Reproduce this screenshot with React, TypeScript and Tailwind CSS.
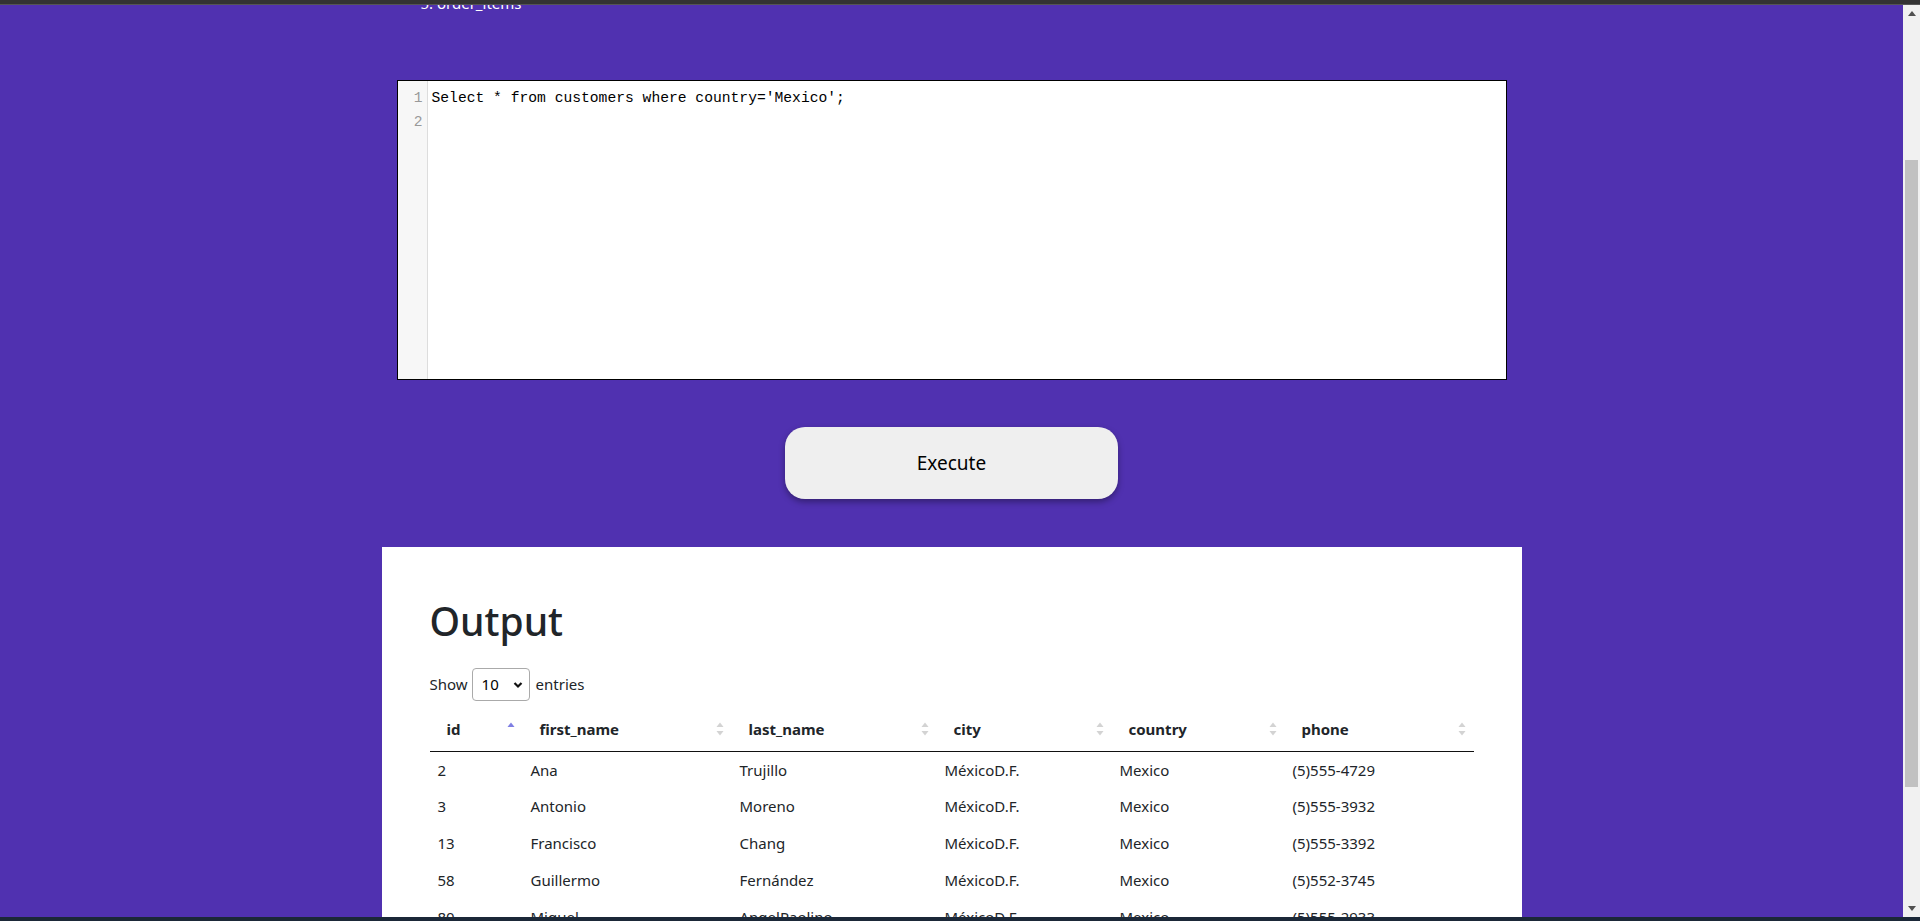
import React from "react";

const rows = [
  ["2", "Ana", "Trujillo", "MéxicoD.F.", "Mexico", "(5)555-4729"],
  ["3", "Antonio", "Moreno", "MéxicoD.F.", "Mexico", "(5)555-3932"],
  ["13", "Francisco", "Chang", "MéxicoD.F.", "Mexico", "(5)555-3392"],
  ["58", "Guillermo", "Fernández", "MéxicoD.F.", "Mexico", "(5)552-3745"],
  ["80", "Miguel", "AngelPaolino", "MéxicoD.F.", "Mexico", "(5)555-2933"],
  ["", "", "", "", "", ""],
];

const cols = [
  { name: "id", w: "w-[93px]", active: true },
  { name: "first_name", w: "w-[209px]", active: false },
  { name: "last_name", w: "w-[205px]", active: false },
  { name: "city", w: "w-[175px]", active: false },
  { name: "country", w: "w-[173px]", active: false },
  { name: "phone", w: "w-[189px]", active: false },
];

function SortIcon({ active }: { active: boolean }) {
  return (
    <svg width="8" height="14" viewBox="0 0 8 14" className="shrink-0">
      <polygon points="4,0.5 7.5,5 0.5,5" fill={active ? "#7f7fe3" : "#d3d3d3"} />
      {!active && <polygon points="0.5,9 7.5,9 4,13.5" fill="#d3d3d3" />}
    </svg>
  );
}

export default function App() {
  const sans = "font-['Noto_Sans','Open_Sans',sans-serif]";
  return (
    <div className={`w-[1920px] h-[921px] flex flex-col overflow-hidden ${sans}`}>
      <div className="h-[4px] bg-[#333333] shrink-0" />
      <div className="h-[1px] bg-[#555555] shrink-0" />
      <div className="flex flex-1 min-h-0">
        {/* main purple area */}
        <div className="flex-1 bg-[#5031b0] overflow-hidden flex flex-col items-center">
          <div className="w-[1110px] mt-[-14px] text-white text-[15px] leading-[24px] pl-[24px]">
            5. order_items
          </div>

          {/* editor */}
          <div className="mt-[65px] w-[1110px] h-[300px] border border-black bg-white flex shrink-0">
            <div className="w-[30px] bg-[#f7f7f7] border-r border-[#dddddd] pt-[5px] pr-[4px] text-right font-['Liberation_Mono',monospace] text-[14.67px] leading-[24px] text-[#999999]">
              <div>1</div>
              <div>2</div>
            </div>
            <div className="flex-1 pt-[5px] pl-[4px] font-['Liberation_Mono',monospace] text-[14.67px] leading-[24px] text-black whitespace-pre">
              <div>Select * from customers where country='Mexico';</div>
              <div> </div>
            </div>
          </div>

          {/* execute button */}
          <button className="mt-[47px] w-[333px] h-[72px] shrink-0 rounded-[20px] bg-[#efefef] text-black text-[19px] shadow-[0_3px_6px_rgba(0,0,0,0.35)]">
            Execute
          </button>

          {/* output panel */}
          <div className="mt-[48px] w-[1140px] bg-white px-[48px] pt-[48px] pb-[40px] shrink-0 text-[#212529]">
            <h1 className="text-[39px] leading-[52px] font-medium">Output</h1>
            <div className="mt-[21px] flex items-center h-[33px] text-[15px]">
              <span>Show</span>
              <div className="ml-[4px] w-[58px] h-[33px] border border-[#aaaaaa] rounded-[4px] flex items-center justify-between pl-[9px] pr-[6px]">
                <span className="text-black">10</span>
                <svg width="10" height="8" viewBox="0 0 10 8">
                  <polyline points="1.5,2 5,5.5 8.5,2" fill="none" stroke="#111" strokeWidth="2.2" />
                </svg>
              </div>
              <span className="ml-[6px]">entries</span>
            </div>

            <table className="mt-[10px] w-[1044px] table-fixed border-collapse text-[15px]">
              <thead>
                <tr className="border-b border-[#111111]">
                  {cols.map((c) => (
                    <th key={c.name} className={`${c.w} h-[40px] p-0 pb-[4px] text-left font-bold`}>
                      <div className="flex items-center justify-between pl-[17px] pr-[8px]">
                        <span>{c.name}</span>
                        <SortIcon active={c.active} />
                      </div>
                    </th>
                  ))}
                </tr>
              </thead>
              <tbody>
                {rows.map((r, i) => (
                  <tr key={i} className="h-[37px]">
                    {r.map((v, j) => (
                      <td key={j} className="pl-[8px] pr-[10px] whitespace-nowrap">
                        {v}
                      </td>
                    ))}
                  </tr>
                ))}
              </tbody>
            </table>
          </div>
        </div>

        {/* scrollbar */}
        <div className="w-[17px] bg-[#f1f1f1] flex flex-col items-center shrink-0">
          <div className="h-[17px] w-full flex items-center justify-center">
            <svg width="8" height="5" viewBox="0 0 8 5">
              <polygon points="4,0 8,5 0,5" fill="#505050" />
            </svg>
          </div>
          <div className="h-[138px]" />
          <div className="w-[13px] h-[627px] bg-[#c1c1c1]" />
          <div className="flex-1" />
          <div className="h-[17px] w-full flex items-center justify-center">
            <svg width="8" height="5" viewBox="0 0 8 5">
              <polygon points="0,0 8,0 4,5" fill="#505050" />
            </svg>
          </div>
        </div>
      </div>
      <div className="h-[4px] bg-[#1b2838] shrink-0" />
    </div>
  );
}
